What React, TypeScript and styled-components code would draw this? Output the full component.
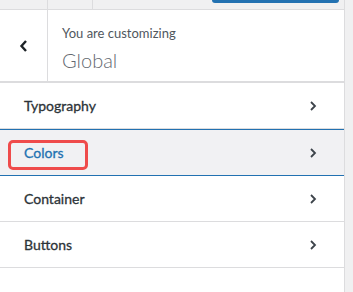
import React from 'react';
import styled, { createGlobalStyle } from 'styled-components';

const GlobalStyle = createGlobalStyle`
  html, body {
    margin: 0;
    padding: 0;
    background: #f0f0f1;
    font-family: Lato, "Open Sans", sans-serif;
  }
`;

const Sidebar = styled.div`
  width: 345px;
  height: 292px;
  background: #fff;
  border-right: 1px solid #dcdcde;
  box-sizing: border-box;
  overflow: hidden;
`;

const TopBar = styled.div`
  display: flex;
  height: 10px;
  background: #f0f0f1;
  border-bottom: 1px solid #dcdcde;
  box-sizing: border-box;
`;

const TopCell = styled.div<{ $w: number }>`
  width: ${(p) => p.$w}px;
  border-right: 1px solid #dcdcde;
`;

const PublishButton = styled.div`
  margin-left: auto;
  margin-right: 5px;
  width: 127px;
  height: 3px;
  background: #2271b1;
  border-radius: 0 0 3px 3px;
`;

const Header = styled.div`
  display: flex;
  height: 71px;
  border-bottom: 2px solid #dcdcde;
`;

const BackButton = styled.div`
  width: 47px;
  flex-shrink: 0;
  display: flex;
  align-items: center;
  justify-content: center;
  border-right: 1px solid #dcdcde;
  color: #1d2327;
`;

const Titles = styled.div`
  padding: 14px 0 0 14px;
`;

const Notice = styled.div`
  font-size: 13px;
  line-height: 18px;
  color: #50575e;
`;

const PanelTitle = styled.div`
  margin-top: 5px;
  font-size: 20px;
  font-weight: 300;
  line-height: 26px;
  color: #646970;
`;

const SectionList = styled.div`
  display: flex;
  flex-direction: column;
`;

const Section = styled.div<{ $active?: boolean }>`
  position: relative;
  display: flex;
  align-items: center;
  justify-content: space-between;
  height: ${(p) => (p.$active ? '47px' : '46px')};
  padding: 0 26px 0 24px;
  box-sizing: border-box;
  border-top: ${(p) => (p.$active ? '1px solid #2271b1' : 'none')};
  border-bottom: 1px solid ${(p) => (p.$active ? '#2271b1' : '#dcdcde')};
  background: ${(p) => (p.$active ? '#f1f1f3' : '#fff')};
  color: ${(p) => (p.$active ? '#2271b1' : '#2c3338')};
  font-size: 14px;
  font-weight: 400;
  -webkit-text-stroke: 0.3px currentColor;
`;

const Arrow = styled.span`
  display: flex;
  color: #3c434a;
`;

const Highlight = styled.span`
  position: absolute;
  left: 8px;
  top: 10px;
  width: 80px;
  height: 30px;
  border: 3px solid #ef4b4b;
  border-radius: 5px;
  box-sizing: border-box;
`;

const Chevron = ({ dir = 'right' }: { dir?: 'left' | 'right' }) => (
  <svg width="10" height="14" viewBox="0 0 10 14" fill="none">
    <path
      d={dir === 'right' ? 'M3 3 L7 7 L3 11' : 'M7 2 L2.5 7 L7 12'}
      stroke="currentColor"
      strokeWidth={dir === 'right' ? 1.8 : 2.4}
    />
  </svg>
);

const sections = ['Typography', 'Colors', 'Container', 'Buttons'];

export default function App() {
  return (
    <>
      <GlobalStyle />
      <Sidebar>
        <TopBar>
          <TopCell $w={47} />
          <TopCell $w={44} />
          <PublishButton />
        </TopBar>
        <Header>
          <BackButton>
            <Chevron dir="left" />
          </BackButton>
          <Titles>
            <Notice>You are customizing</Notice>
            <PanelTitle>Global</PanelTitle>
          </Titles>
        </Header>
        <SectionList>
          {sections.map((name) => (
            <Section key={name} $active={name === 'Colors'}>
              {name === 'Colors' && <Highlight />}
              <span>{name}</span>
              <Arrow>
                <Chevron />
              </Arrow>
            </Section>
          ))}
        </SectionList>
      </Sidebar>
    </>
  );
}
